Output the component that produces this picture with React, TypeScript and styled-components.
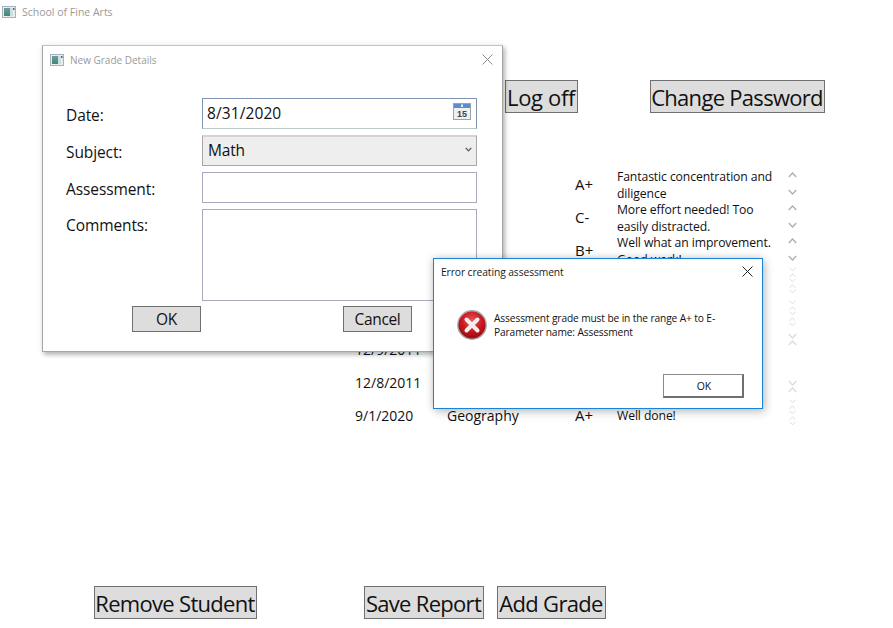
import React from "react";
import styled, { createGlobalStyle } from "styled-components";

const Global = createGlobalStyle`
  html, body { margin: 0; padding: 0; background: #fff; }
  body { font-family: "Open Sans", "Noto Sans", "Liberation Sans", sans-serif; color: #111; overflow: hidden; }
  * { box-sizing: border-box; }
`;

const Page = styled.div`
  position: relative;
  width: 893px;
  height: 628px;
  display: flex;
  flex-direction: column;
  overflow: hidden;
`;

const TitleBar = styled.div`
  height: 24px;
  padding-left: 2px;
  display: flex;
  align-items: center;
  gap: 6px;
  font-size: 10.5px;
  color: #9a9a9a;
`;

const TopActions = styled.div`
  margin-top: 56px;
  padding-left: 505px;
  display: flex;
  gap: 72px;
`;

const BigButton = styled.button<{ $w: number }>`
  width: ${(p) => p.$w}px;
  height: 33px;
  padding: 1px 1px 0 0;
  background: #dddddd;
  border: 1px solid #707070;
  color: #111;
  font-family: inherit;
  font-size: 22px;
  letter-spacing: -0.7px;
  line-height: 29px;
  white-space: nowrap;
`;

const LogOffButton = styled(BigButton)`
  letter-spacing: -0.35px;
`;

const Table = styled.div`
  margin-top: 55px;
  margin-left: 355px;
  display: flex;
  flex-direction: column;
`;

const Row = styled.div`
  height: 33px;
  display: grid;
  grid-template-columns: 92px 128px 42px 168px 22px;
  align-items: center;
`;

const Cell = styled.div`
  font-size: 14px;
  white-space: nowrap;
`;

const Grade = styled.div`
  font-size: 15px;
  padding-bottom: 2px;
  white-space: nowrap;
`;

const Comment = styled.div`
  font-size: 12.2px;
  line-height: 17px;
  letter-spacing: -0.1px;
  height: 33px;
  overflow: hidden;
  display: flex;
  flex-direction: column;
  justify-content: center;
  white-space: nowrap;
`;

const Spinner = styled.div`
  height: 33px;
  margin-left: 3px;
  padding: 4px 0 6px;
  display: flex;
  flex-direction: column;
  justify-content: space-between;
  svg { display: block; }
`;

const GhostSpinner = styled.div<{ $align: string }>`
  height: 33px;
  margin-left: 3px;
  padding-bottom: 5px;
  display: flex;
  flex-direction: column;
  justify-content: ${(p) => p.$align};
  opacity: 0.42;
  svg { display: block; margin-bottom: 1px; }
`;

const BottomActions = styled.div`
  margin-top: 154px;
  padding-left: 94px;
  display: flex;
`;

const LeadButton = styled(BigButton)`
  margin-right: 107px;
`;

const MiddleButton = styled(BigButton)`
  margin-right: 13px;
`;

const GradeWindow = styled.div`
  position: absolute;
  left: 42px;
  top: 45px;
  width: 461px;
  height: 307px;
  background: #fff;
  border: 1px solid #a6a6a6;
  border-top-color: #c4c4c4;
  box-shadow: 2px 3px 4px rgba(0, 0, 0, 0.22), 1px 1px 7px rgba(0, 0, 0, 0.12);
`;

const WindowHead = styled.div`
  height: 29px;
  padding: 0 9px 2px 7px;
  display: flex;
  align-items: center;
  gap: 6px;
  font-size: 10px;
  color: #9a9a9a;
`;

const CloseSlot = styled.div`
  margin-left: auto;
  display: flex;
`;

const Form = styled.div`
  margin-top: 23px;
  margin-left: 23px;
  display: grid;
  grid-template-columns: 136px 275px;
  grid-template-rows: 31px 31px 31px 92px;
  row-gap: 6px;
`;

const Label = styled.div`
  font-size: 15.5px;
  letter-spacing: -0.1px;
  line-height: 31px;
  padding-top: 2px;
`;

const CommentsLabel = styled(Label)`
  padding-top: 1px;
`;

const Field = styled.div`
  border: 1px solid #a9a9bd;
  background: #fff;
`;

const DateField = styled(Field)`
  display: flex;
  align-items: center;
  justify-content: space-between;
  padding: 0 0 2px 4px;
  font-size: 15.5px;
  letter-spacing: 0.1px;
  border-color: #7f94b4 #7f94b4 #b6ccc4 #7f94b4;
`;

const CalendarSlot = styled.div`
  display: flex;
  margin: -3px 0 0 0;
  padding-right: 5px;
`;

const Select = styled(Field)`
  display: flex;
  align-items: center;
  justify-content: space-between;
  padding: 0 4px 3px 5px;
  background: #eeeeee;
  border-color: #a6a6a6;
  border-top: 2px solid #d4d4d4;
  font-size: 15.5px;
  letter-spacing: -0.2px;
`;

const WindowActions = styled.div`
  margin-top: 5px;
  margin-left: 89px;
  display: flex;
  gap: 142px;
`;

const SmallButton = styled.button`
  width: 69px;
  height: 26px;
  padding: 0;
  background: #dddddd;
  border: 1px solid #707070;
  color: #111;
  font-family: inherit;
  font-size: 15.5px;
  letter-spacing: -0.35px;
`;

const ErrorWindow = styled.div`
  position: absolute;
  left: 433px;
  top: 258px;
  width: 330px;
  height: 151px;
  background: #fff;
  border: 1px solid #1883d7;
  box-shadow: 0 0 8px rgba(0, 0, 0, 0.2), 3px 4px 9px rgba(0, 0, 0, 0.14);
  display: flex;
  flex-direction: column;
`;

const ErrorHead = styled.div`
  height: 27px;
  padding: 0 9px 2px 7px;
  display: flex;
  align-items: center;
  font-size: 10.3px;
  letter-spacing: -0.1px;
  color: #1a1a1a;
`;

const ErrorBody = styled.div`
  margin-top: 24px;
  padding-left: 23px;
  display: flex;
  align-items: center;
  gap: 7px;
`;

const ErrorText = styled.div`
  font-size: 10.2px;
  line-height: 14px;
  letter-spacing: -0.12px;
  color: #111;
  white-space: nowrap;
`;

const ErrorActions = styled.div`
  margin-top: auto;
  padding: 0 18px 10px 0;
  display: flex;
  justify-content: flex-end;
`;

const ErrorOk = styled.button`
  width: 81px;
  height: 24px;
  padding: 0 0 0 2px;
  background: #fff;
  border: 1px solid #8a8a8a;
  border-right: 2px solid #6f6f6f;
  border-bottom: 2px solid #6f6f6f;
  color: #111;
  font-family: inherit;
  font-size: 10.5px;
`;

const CalendarDigits = styled.text`
  font-family: "Liberation Sans", sans-serif;
  font-size: 9px;
  font-weight: 700;
  fill: #444;
`;

const AppIcon = () => (
  <svg width="14" height="12" viewBox="0 0 14 12">
    <defs>
      <linearGradient id="appFill" x1="0" y1="0" x2="0" y2="1">
        <stop offset="0%" stopColor="#6d9aa8" />
        <stop offset="100%" stopColor="#3c8a6c" />
      </linearGradient>
    </defs>
    <rect x="0.5" y="0.5" width="13" height="11" fill="#e8edf0" stroke="#a8b0b8" />
    <rect x="2" y="2" width="6" height="8" fill="url(#appFill)" />
    <rect x="8" y="2" width="3" height="8" fill="#cfdde0" />
    <rect x="11" y="2" width="1.5" height="2" fill="#3f6f85" />
  </svg>
);

const CloseIcon = ({ color }: { color: string }) => (
  <svg width="11" height="11" viewBox="0 0 11 11">
    <path d="M0.5 0.5 L10.5 10.5 M10.5 0.5 L0.5 10.5" stroke={color} strokeWidth="1" fill="none" />
  </svg>
);

const CalendarIcon = () => (
  <svg width="18" height="17" viewBox="0 0 18 17">
    <rect x="0.5" y="0.5" width="17" height="16" fill="#f0f0f0" stroke="#9aa4ae" />
    <rect x="1" y="1" width="16" height="4" fill="#5b8fca" />
    <rect x="8" y="1.5" width="2" height="2.5" fill="#e6eef8" />
    <CalendarDigits x="9" y="14" textAnchor="middle">15</CalendarDigits>
  </svg>
);

const SelectChevron = () => (
  <svg width="7" height="5" viewBox="0 0 7 5">
    <path d="M0.7 0.8 L3.5 3.8 L6.3 0.8" stroke="#555" strokeWidth="1.2" fill="none" />
  </svg>
);

const ErrorIcon = () => (
  <svg width="30" height="30" viewBox="0 0 30 30">
    <defs>
      <radialGradient id="errFill" cx="50%" cy="35%" r="65%">
        <stop offset="0%" stopColor="#e8545a" />
        <stop offset="60%" stopColor="#c8141c" />
        <stop offset="100%" stopColor="#8f0d12" />
      </radialGradient>
    </defs>
    <circle cx="15" cy="15" r="14.2" fill="url(#errFill)" stroke="#a9a9a9" strokeWidth="1.4" />
    <path d="M9.5 9.5 L20.5 20.5 M20.5 9.5 L9.5 20.5" stroke="#f2eeee" strokeWidth="4" strokeLinecap="round" fill="none" />
  </svg>
);

const Up = () => (
  <svg width="9" height="6" viewBox="0 0 9 6">
    <path d="M0.8 5 L4.5 1 L8.2 5" stroke="#ababab" strokeWidth="1.2" fill="none" />
  </svg>
);

const Down = () => (
  <svg width="9" height="6" viewBox="0 0 9 6">
    <path d="M0.8 1 L4.5 5 L8.2 1" stroke="#ababab" strokeWidth="1.2" fill="none" />
  </svg>
);

type GhostKind = "full" | "top" | "bottom";

const ghostPatterns: Record<GhostKind, { align: string; count: number }> = {
  full: { align: "flex-start", count: 5 },
  top: { align: "flex-start", count: 2 },
  bottom: { align: "flex-end", count: 2 },
};

const Ghost = ({ kind }: { kind: GhostKind }) => {
  const { align, count } = ghostPatterns[kind];
  return (
    <GhostSpinner $align={align}>
      {Array.from({ length: count }, (_, i) => (i % 2 === 0 ? <Down key={i} /> : <Up key={i} />))}
    </GhostSpinner>
  );
};

type RowData = {
  date: string;
  subject: string;
  grade: string;
  comment: string[];
  ghost?: GhostKind;
};

const rows: RowData[] = [
  { date: "", subject: "", grade: "A+", comment: ["Fantastic concentration and", "diligence"] },
  { date: "", subject: "", grade: "C-", comment: ["More effort needed! Too", "easily distracted."] },
  { date: "", subject: "", grade: "B+", comment: ["Well what an improvement.", "Good work!"] },
  { date: "", subject: "", grade: "", comment: [], ghost: "full" },
  { date: "", subject: "", grade: "", comment: [], ghost: "full" },
  { date: "12/9/2011", subject: "", grade: "", comment: [], ghost: "top" },
  { date: "12/8/2011", subject: "", grade: "", comment: [], ghost: "bottom" },
  { date: "9/1/2020", subject: "Geography", grade: "A+", comment: ["Well done!"], ghost: "full" },
];

export default function App() {
  return (
    <Page>
      <Global />
      <TitleBar>
        <AppIcon />
        School of Fine Arts
      </TitleBar>

      <TopActions>
        <LogOffButton $w={73}>Log off</LogOffButton>
        <BigButton $w={175}>Change Password</BigButton>
      </TopActions>

      <Table>
        {rows.map((r, i) => (
          <Row key={i}>
            <Cell>{r.date}</Cell>
            <Cell>{r.subject}</Cell>
            <Grade>{r.grade}</Grade>
            <Comment>
              {r.comment.map((line) => (
                <span key={line}>{line}</span>
              ))}
            </Comment>
            {r.ghost ? (
              <Ghost kind={r.ghost} />
            ) : (
              <Spinner>
                <Up />
                <Down />
              </Spinner>
            )}
          </Row>
        ))}
      </Table>

      <BottomActions>
        <LeadButton $w={163}>Remove Student</LeadButton>
        <MiddleButton $w={120}>Save Report</MiddleButton>
        <BigButton $w={109}>Add Grade</BigButton>
      </BottomActions>

      <GradeWindow>
        <WindowHead>
          <AppIcon />
          New Grade Details
          <CloseSlot>
            <CloseIcon color="#8a8a8a" />
          </CloseSlot>
        </WindowHead>
        <Form>
          <Label>Date:</Label>
          <DateField>
            8/31/2020
            <CalendarSlot>
              <CalendarIcon />
            </CalendarSlot>
          </DateField>
          <Label>Subject:</Label>
          <Select>
            Math
            <SelectChevron />
          </Select>
          <Label>Assessment:</Label>
          <Field />
          <CommentsLabel>Comments:</CommentsLabel>
          <Field />
        </Form>
        <WindowActions>
          <SmallButton>OK</SmallButton>
          <SmallButton>Cancel</SmallButton>
        </WindowActions>
      </GradeWindow>

      <ErrorWindow>
        <ErrorHead>
          Error creating assessment
          <CloseSlot>
            <CloseIcon color="#222" />
          </CloseSlot>
        </ErrorHead>
        <ErrorBody>
          <ErrorIcon />
          <ErrorText>
            Assessment grade must be in the range A+ to E-
            <br />
            Parameter name: Assessment
          </ErrorText>
        </ErrorBody>
        <ErrorActions>
          <ErrorOk>OK</ErrorOk>
        </ErrorActions>
      </ErrorWindow>
    </Page>
  );
}
